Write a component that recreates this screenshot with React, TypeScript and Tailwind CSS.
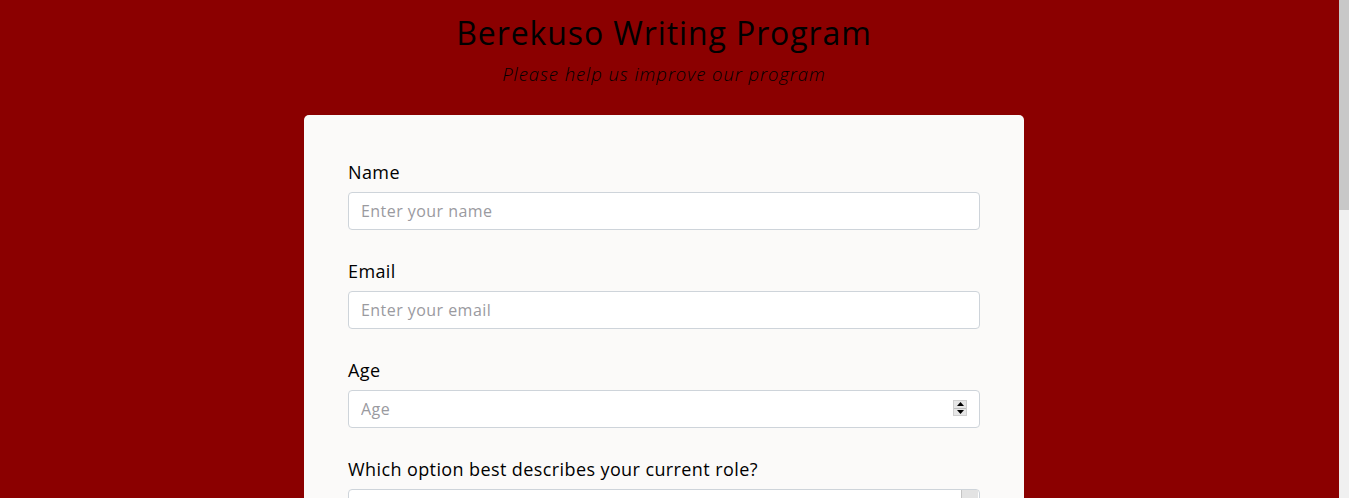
import React from "react";

const font = { fontFamily: '"Open Sans", "Noto Sans", sans-serif' };

function Field({ label, placeholder, type = "text", spinner = false }: { label: string; placeholder: string; type?: string; spinner?: boolean }) {
  return (
    <div className="flex flex-col">
      <label className="text-[18px] leading-[26px] tracking-[0.4px] text-black mb-[7px]">{label}</label>
      <div className="relative">
        <input
          type={type}
          placeholder={placeholder}
          className="w-full h-[38px] rounded-[4px] border border-[#ced4da] bg-white px-[12px] text-[16px] tracking-[0.45px] text-black placeholder:text-[#9a9a9f] outline-none"
        />
        {spinner && (
          <div className="absolute right-[13px] top-[10px] w-[14px] h-[16px] bg-[#e6e6e6] border border-[#cfcfcf] flex flex-col">
            <div className="flex-1 flex items-center justify-center border-b border-[#bdbdbd]">
              <svg width="7" height="4" viewBox="0 0 7 4"><path d="M0 4 L3.5 0 L7 4 Z" fill="#000" /></svg>
            </div>
            <div className="flex-1 flex items-center justify-center">
              <svg width="7" height="4" viewBox="0 0 7 4"><path d="M0 0 L3.5 4 L7 0 Z" fill="#000" /></svg>
            </div>
          </div>
        )}
      </div>
    </div>
  );
}

export default function App() {
  return (
    <div className="flex h-screen bg-[#8b0000]" style={font}>
      <main className="flex-1 overflow-hidden">
        <div className="pr-[11px] pt-[13px] pb-[40px]">
          <h1 className="text-center text-[32px] leading-[40px] tracking-[0.9px] text-black font-normal">Berekuso Writing Program</h1>
          <p className="text-center text-[18.5px] leading-[27px] tracking-[0.95px] italic font-light text-black mt-[7px]">Please help us improve our program</p>
          <div className="mx-auto mt-[28px] w-[720px] rounded-[5px] bg-[#fbfaf9] p-[44px] flex flex-col gap-[28px]">
            <Field label="Name" placeholder="Enter your name" />
            <Field label="Email" placeholder="Enter your email" type="email" />
            <Field label="Age" placeholder="Age" spinner />
            <div className="flex flex-col">
              <label className="text-[18px] leading-[26px] tracking-[0.4px] text-black mb-[7px]">Which option best describes your current role?</label>
              <div className="relative h-[38px] rounded-[4px] border border-[#ced4da] bg-white">
                <div className="absolute right-[1px] top-0 bottom-0 w-[17px] bg-[#e3e3e3] border-l border-[#c4c4c4]" />
              </div>
            </div>
          </div>
        </div>
      </main>
      <div className="w-[10px] shrink-0 bg-[#f0f0f0]">
        <div className="h-[210px] bg-[#c8c8c8]" />
      </div>
    </div>
  );
}
